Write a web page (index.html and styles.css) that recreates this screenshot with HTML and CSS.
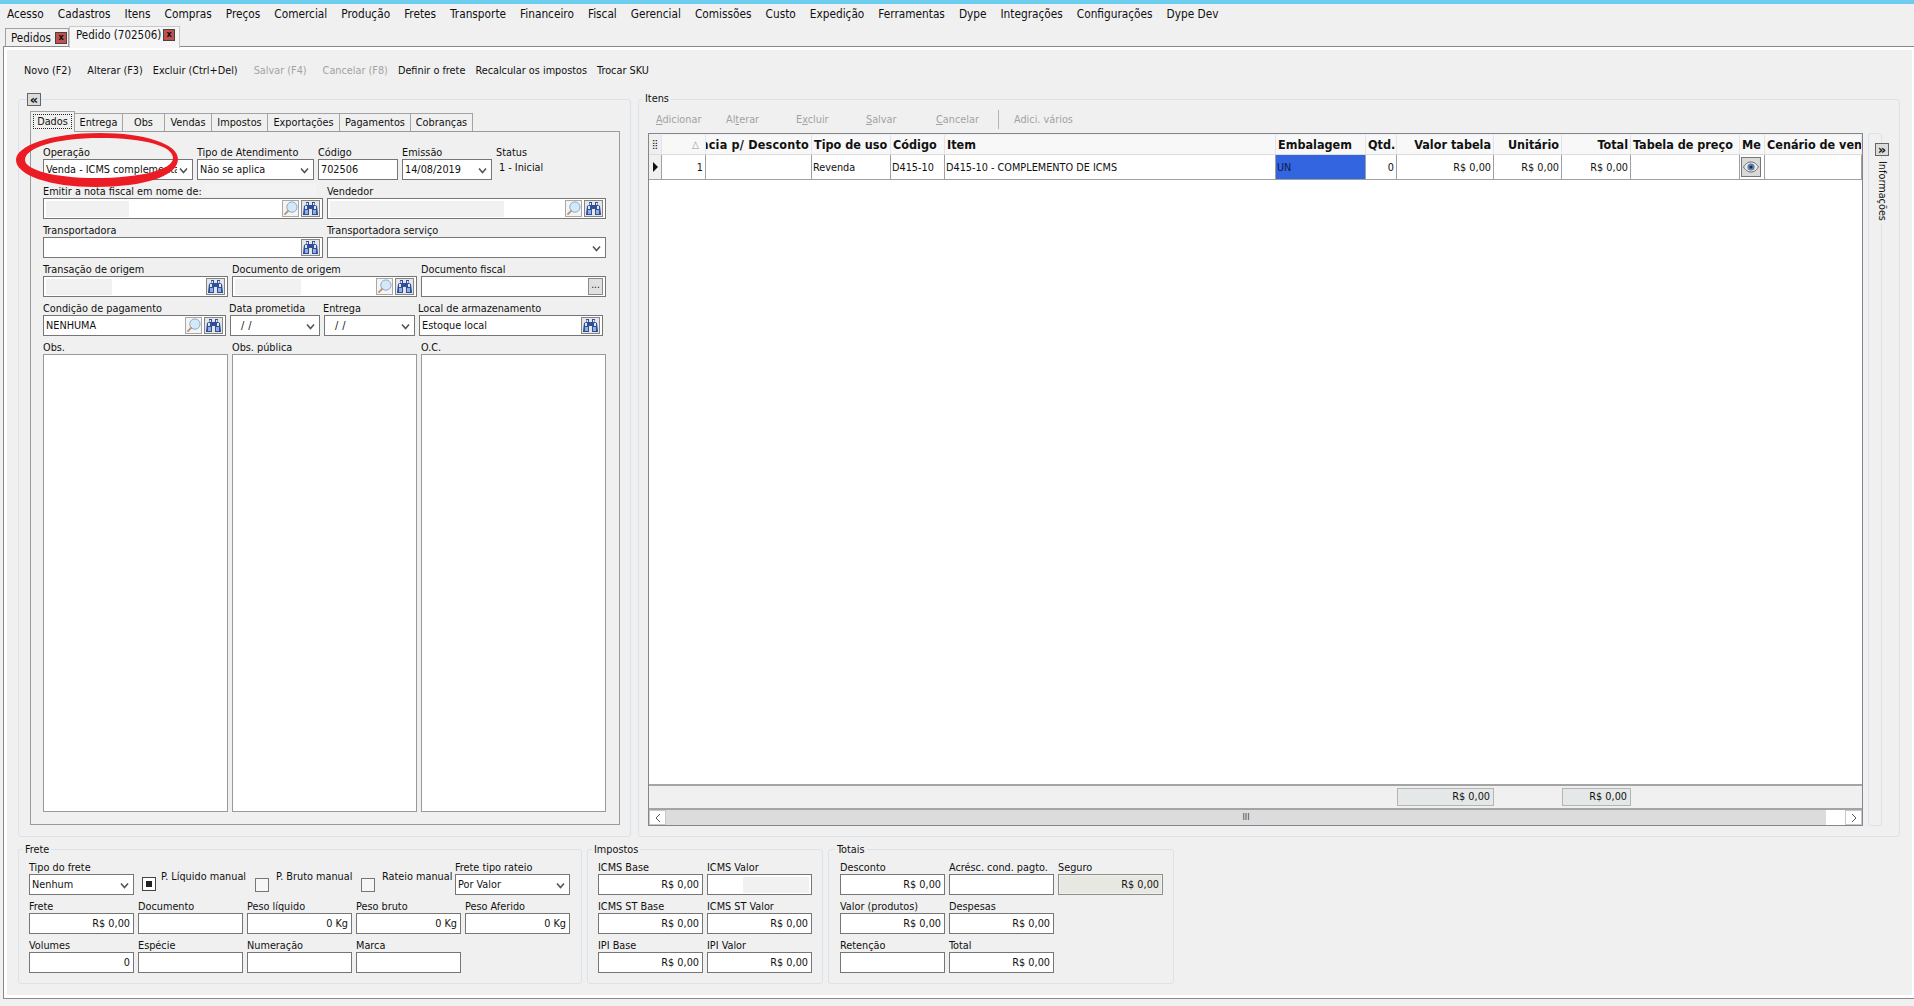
FILE: index.html
```html
<!DOCTYPE html>
<html lang="pt-BR">
<head>
    <meta charset="UTF-8">
    <title>Pedido (702506)</title>
    <link rel="stylesheet" href="styles.css">
</head>
<body>
    <svg class="sprite" width="0" height="0">
        <symbol id="chev" viewBox="0 0 9 7"><path d="M1 1.500 4.500 5.500 8 1.500" fill="none" stroke="#555" stroke-width="1.600"/></symbol>
        <symbol id="binoc" viewBox="0 0 17 15">
            <path d="M4 1h3v3h3V1h3v3l2 1 1 8v1h-6V8H7v6H1v-1l1-8 2-1z" fill="#2f4f9a"/>
            <path d="M3 9h3v4H3zM11 9h3v4h-3z" fill="#8fb0e2"/>
            <path d="M4.500 2H6v2H4.500zM11 2h1.500v2H11zM3 5h2v3H3zM12 5h2v3h-2z" fill="#dde8f7"/>
        </symbol>
        <symbol id="lupa" viewBox="0 0 16 16">
            <circle cx="9.500" cy="6.500" r="5.500" fill="#d3e8f8" stroke="#8aa6bf"/>
            <path d="M6 10 1.500 14.500" stroke="#b8937a" stroke-width="2"/>
        </symbol>
        <symbol id="eye" viewBox="0 0 16 12">
            <path d="M.5 6C3 2 5.500 1 8 1s5 1 7.500 5C13 10 10.500 11 8 11S3 10 .5 6z" fill="#e4e9ee" stroke="#75695f"/>
            <circle cx="8" cy="6" r="3.600" fill="#5b7fae"/>
            <circle cx="8" cy="6" r="1.500" fill="#1d2c44"/>
        </symbol>
    </svg>

    <div class="topbar"></div>
    <nav class="menu">
        <span>Acesso</span><span>Cadastros</span><span>Itens</span><span>Compras</span><span>Preços</span>
        <span>Comercial</span><span>Produção</span><span>Fretes</span><span>Transporte</span><span>Financeiro</span>
        <span>Fiscal</span><span>Gerencial</span><span>Comissões</span><span>Custo</span><span>Expedição</span>
        <span>Ferramentas</span><span>Dype</span><span>Integrações</span><span>Configurações</span><span>Dype Dev</span>
    </nav>

    <div class="doc-tabs">
        <div class="doc-tab">Pedidos <span class="close">x</span></div>
        <div class="doc-tab active">Pedido (702506) <span class="close">x</span></div>
    </div>

    <div class="panel">
        <div class="panel-inner">
            <div class="toolbar">
                <span class="tool">Novo (F2)</span>
                <span class="tool far">Alterar (F3)</span>
                <span class="tool">Excluir (Ctrl+Del)</span>
                <span class="tool far off">Salvar (F4)</span>
                <span class="tool far off">Cancelar (F8)</span>
                <span class="tool">Definir o frete</span>
                <span class="tool">Recalcular os impostos</span>
                <span class="tool">Trocar SKU</span>
            </div>

            <div class="main">
                <section class="group group-left">
                    <button class="toggle toggle-left">«</button>
                    <div class="tabs">
                        <div class="tab active"><span class="focus">Dados</span></div>
                        <div class="tab w-entrega">Entrega</div>
                        <div class="tab w-obs">Obs</div>
                        <div class="tab w-vendas">Vendas</div>
                        <div class="tab w-impostos">Impostos</div>
                        <div class="tab w-export">Exportações</div>
                        <div class="tab w-pagto">Pagamentos</div>
                        <div class="tab w-cobr">Cobranças</div>
                    </div>
                    <div class="pane">
                        <div class="row row-1">
                            <div class="block"><label>Operação</label><div class="field"><span class="val clip">Venda - ICMS complementar</span><svg class="chev"><use href="#chev"/></svg></div></div>
                            <div class="block"><label>Tipo de Atendimento</label><div class="field"><span class="val">Não se aplica</span><svg class="chev"><use href="#chev"/></svg></div></div>
                            <div class="block"><label>Código</label><div class="field"><span class="val">702506</span></div></div>
                            <div class="block"><label>Emissão</label><div class="field"><span class="val">14/08/2019</span><svg class="chev"><use href="#chev"/></svg></div></div>
                            <div class="block"><label>Status</label><div class="status">1 - Inicial</div></div>
                        </div>
                        <div class="row row-2">
                            <div class="block"><label class="with-mask">Emitir a nota fiscal em nome de: <span class="mask-label"></span></label><div class="field"><span class="mask mask-83"></span><span class="ico-btn lupa"><svg><use href="#lupa"/></svg></span><span class="ico-btn"><svg><use href="#binoc"/></svg></span></div></div>
                            <div class="block"><label>Vendedor</label><div class="field"><span class="mask mask-174"></span><span class="ico-btn lupa"><svg><use href="#lupa"/></svg></span><span class="ico-btn"><svg><use href="#binoc"/></svg></span></div></div>
                        </div>
                        <div class="row row-2">
                            <div class="block"><label>Transportadora</label><div class="field"><span class="ico-btn push"><svg><use href="#binoc"/></svg></span></div></div>
                            <div class="block"><label>Transportadora serviço</label><div class="field"><svg class="chev"><use href="#chev"/></svg></div></div>
                        </div>
                        <div class="row row-3">
                            <div class="block"><label>Transação de origem</label><div class="field"><span class="mask mask-66"></span><span class="ico-btn push"><svg><use href="#binoc"/></svg></span></div></div>
                            <div class="block"><label>Documento de origem</label><div class="field"><span class="mask mask-66"></span><span class="ico-btn lupa"><svg><use href="#lupa"/></svg></span><span class="ico-btn"><svg><use href="#binoc"/></svg></span></div></div>
                            <div class="block"><label>Documento fiscal</label><div class="field"><span class="dots">...</span></div></div>
                        </div>
                        <div class="row row-5">
                            <div class="block"><label>Condição de pagamento</label><div class="field"><span class="val">NENHUMA</span><span class="ico-btn lupa"><svg><use href="#lupa"/></svg></span><span class="ico-btn"><svg><use href="#binoc"/></svg></span></div></div>
                            <div class="block"><label>Data prometida</label><div class="field"><span class="val date">/ /</span><svg class="chev"><use href="#chev"/></svg></div></div>
                            <div class="block"><label>Entrega</label><div class="field"><span class="val date">/ /</span><svg class="chev"><use href="#chev"/></svg></div></div>
                            <div class="block"><label>Local de armazenamento</label><div class="field"><span class="val">Estoque local</span><span class="ico-btn push"><svg><use href="#binoc"/></svg></span></div></div>
                        </div>
                        <div class="row row-3 row-memo">
                            <div class="block"><label>Obs.</label><div class="memo"></div></div>
                            <div class="block"><label>Obs. pública</label><div class="memo"></div></div>
                            <div class="block"><label>O.C.</label><div class="memo"></div></div>
                        </div>
                    </div>
                </section>

                <section class="group group-right">
                    <span class="legend">Itens</span>
                    <div class="items-tools">
                        <span class="sub-btn"><u>A</u>dicionar</span>
                        <span class="sub-btn">Al<u>t</u>erar</span>
                        <span class="sub-btn">E<u>x</u>cluir</span>
                        <span class="sub-btn"><u>S</u>alvar</span>
                        <span class="sub-btn short"><u>C</u>ancelar</span>
                        <span class="sep"></span>
                        <span class="sub-btn">Adici. vários</span>
                    </div>
                    <div class="items-body">
                        <div class="grid">
                            <div class="grid-row grid-head">
                                <div class="hc ind">⣿</div>
                                <div class="hc num sort">△</div>
                                <div class="hc num clipl"><span>Importância p/ Desconto</span></div>
                                <div class="hc">Tipo de uso</div>
                                <div class="hc">Código</div>
                                <div class="hc">Item</div>
                                <div class="hc">Embalagem</div>
                                <div class="hc num">Qtd.</div>
                                <div class="hc num">Valor tabela</div>
                                <div class="hc num">Unitário</div>
                                <div class="hc num">Total</div>
                                <div class="hc">Tabela de preço</div>
                                <div class="hc">Me</div>
                                <div class="hc">Cenário de venda</div>
                            </div>
                            <div class="grid-row grid-line">
                                <div class="gc ind"><span class="arrow"></span></div>
                                <div class="gc num">1</div>
                                <div class="gc"></div>
                                <div class="gc">Revenda</div>
                                <div class="gc">D415-10</div>
                                <div class="gc">D415-10 - COMPLEMENTO DE ICMS</div>
                                <div class="gc selected">UN</div>
                                <div class="gc num">0</div>
                                <div class="gc num">R$ 0,00</div>
                                <div class="gc num">R$ 0,00</div>
                                <div class="gc num">R$ 0,00</div>
                                <div class="gc"></div>
                                <div class="gc eye-cell"><span class="eye-btn"><svg><use href="#eye"/></svg></span></div>
                                <div class="gc"></div>
                            </div>
                            <div class="grid-empty"></div>
                            <div class="grid-row grid-foot">
                                <div class="sum sum-valor">R$ 0,00</div>
                                <div class="sum sum-total">R$ 0,00</div>
                            </div>
                            <div class="hscroll">
                                <span class="sb-btn"><svg viewBox="0 0 6 10"><path d="M5 1 1 5l4 4" fill="none" stroke="#555"/></svg></span>
                                <span class="sb-track">III</span>
                                <span class="sb-rest"></span>
                                <span class="sb-btn"><svg viewBox="0 0 6 10"><path d="M1 1l4 4-4 4" fill="none" stroke="#555"/></svg></span>
                            </div>
                        </div>
                        <aside class="side">
                            <button class="toggle toggle-side">»</button>
                            <span class="side-label">Informações</span>
                        </aside>
                    </div>
                </section>
            </div>

            <div class="bottom">
                <section class="group box-frete">
                    <span class="legend">Frete</span>
                    <div class="cols cols-5">
                        <div class="frete-top">
                            <div class="block w-105"><label>Tipo do frete</label><div class="field"><span class="val">Nenhum</span><svg class="chev"><use href="#chev"/></svg></div></div>
                            <div class="check c-1"><span class="box on"></span><span>P. Líquido manual</span></div>
                            <div class="check c-2"><span class="box"></span><span>P. Bruto manual</span></div>
                            <div class="check c-3"><span class="box"></span><span>Rateio manual</span></div>
                            <div class="block w-115"><label>Frete tipo rateio</label><div class="field"><span class="val">Por Valor</span><svg class="chev"><use href="#chev"/></svg></div></div>
                        </div>
                        <div class="block"><label>Frete</label><div class="field num">R$ 0,00</div></div>
                        <div class="block"><label>Documento</label><div class="field"></div></div>
                        <div class="block"><label>Peso líquido</label><div class="field num">0 Kg</div></div>
                        <div class="block"><label>Peso bruto</label><div class="field num">0 Kg</div></div>
                        <div class="block"><label>Peso Aferido</label><div class="field num">0 Kg</div></div>
                        <div class="block"><label>Volumes</label><div class="field num">0</div></div>
                        <div class="block"><label>Espécie</label><div class="field"></div></div>
                        <div class="block"><label>Numeração</label><div class="field"></div></div>
                        <div class="block"><label>Marca</label><div class="field"></div></div>
                    </div>
                </section>

                <section class="group box-impostos">
                    <span class="legend">Impostos</span>
                    <div class="cols cols-2">
                        <div class="block"><label>ICMS Base</label><div class="field num">R$ 0,00</div></div>
                        <div class="block"><label>ICMS Valor</label><div class="field"><span class="mask mask-66 push"></span></div></div>
                        <div class="block"><label>ICMS ST Base</label><div class="field num">R$ 0,00</div></div>
                        <div class="block"><label>ICMS ST Valor</label><div class="field num">R$ 0,00</div></div>
                        <div class="block"><label>IPI Base</label><div class="field num">R$ 0,00</div></div>
                        <div class="block"><label>IPI Valor</label><div class="field num">R$ 0,00</div></div>
                    </div>
                </section>

                <section class="group box-totais">
                    <span class="legend">Totais</span>
                    <div class="cols cols-3">
                        <div class="block"><label>Desconto</label><div class="field num">R$ 0,00</div></div>
                        <div class="block"><label>Acrésc. cond. pagto.</label><div class="field"></div></div>
                        <div class="block"><label>Seguro</label><div class="field num disabled">R$ 0,00</div></div>
                        <div class="block"><label>Valor (produtos)</label><div class="field num">R$ 0,00</div></div>
                        <div class="block span-2"><label>Despesas</label><div class="field num">R$ 0,00</div></div>
                        <div class="block"><label>Retenção</label><div class="field"></div></div>
                        <div class="block span-2"><label>Total</label><div class="field num">R$ 0,00</div></div>
                    </div>
                </section>
            </div>
        </div>
    </div>

    <svg class="circle" width="170" height="60" viewBox="14 130 170 60">
        <path fill="#ec1c24" fill-rule="evenodd" d="M16 160C16 146 50 133 100 133C145 133 178 144 178 159C178 176 145 187 95 187C50 187 16 175 16 160ZM25 160C25 170 55 178 95 178C140 178 173 170 173 158C173 146 145 138 100 138C55 138 25 148 25 160Z"/>
    </svg>
</body>
</html>
```

FILE: styles.css
```css
* {
    box-sizing: border-box;
}
html, body {
    margin: 0;
    height: 1006px;
    overflow: hidden;
}
body {
    position: relative;
    display: flex;
    flex-direction: column;
    background: #f0f0f0;
    font-family: "DejaVu Sans Condensed", "DejaVu Sans", sans-serif;
    font-stretch: condensed;
    font-size: 10.800px;
    color: #111;
}
.sprite {
    position: absolute;
}
.topbar {
    height: 4px;
    background: #6ccdee;
}
.menu {
    display: flex;
    gap: 14px;
    height: 22px;
    padding: 3px 0 0 7px;
    font-size: 11.750px;
    line-height: 14px;
}
.doc-tabs {
    display: flex;
    align-items: flex-end;
    height: 20px;
    padding-left: 5px;
    position: relative;
    z-index: 1;
}
.doc-tab {
    display: flex;
    align-items: center;
    justify-content: space-between;
    width: 64px;
    height: 18px;
    padding: 0 1px 0 5px;
    border: 1px solid #a0a0a0;
    border-bottom: none;
    font-size: 11.500px;
    white-space: nowrap;
}
.doc-tab.active {
    width: 111px;
    height: 22px;
    margin-bottom: -2px;
    padding: 0 4px 5px 6px;
    background: #f6f6f6;
    border-color: #c8c8c8;
}
.close {
    flex: none;
    width: 12px;
    height: 12px;
    background: #c0504d;
    border: 1px solid #444;
    color: #111;
    font-size: 9px;
    font-weight: bold;
    line-height: 9px;
    text-align: center;
}
.panel {
    flex: 1;
    margin: 0 0 7px 3px;
    padding: 3px 2px 3px 3px;
    background: #fff;
    border: 1px solid #8a8a8a;
    border-right: none;
}
.panel-inner {
    display: flex;
    flex-direction: column;
    height: 100%;
    background: #f0f0f0;
    padding-bottom: 11px;
}
.toolbar {
    display: flex;
    height: 49px;
    padding: 14px 0 0 17px;
    line-height: 14px;
    gap: 10px;
}
.tool.far {
    margin-left: 6px;
}
.off {
    color: #a3a3a3;
}
.main {
    display: flex;
    flex: 1;
    min-height: 0;
    gap: 7px;
    padding: 0 12px 0 11px;
}
.group {
    position: relative;
    border: 1px solid #dbe2e9;
    border-radius: 3px;
}
.legend {
    position: absolute;
    top: -8px;
    left: 4px;
    padding: 0 2px;
    background: #f0f0f0;
    line-height: 14px;
}
.toggle {
    position: absolute;
    width: 14px;
    height: 13px;
    padding: 0;
    border: 1px solid #666;
    background: #dcdcdc;
    font: bold 13px/9px "DejaVu Sans", sans-serif;
    color: #111;
}
.toggle-left {
    top: -7px;
    left: 8px;
}
.group-left {
    display: flex;
    flex-direction: column;
    width: 613px;
    padding: 11px 10px 11px 11px;
}
.tabs {
    display: flex;
    align-items: flex-end;
    height: 20px;
    position: relative;
    z-index: 1;
}
.tab {
    height: 18px;
    border: 1px solid #a3a3a3;
    border-bottom: none;
    border-left: none;
    line-height: 17px;
    text-align: center;
}
.tab.active {
    width: 45px;
    height: 21px;
    margin-bottom: -1px;
    padding: 2px 2px 0;
    background: #f0f0f0;
    border-left: 1px solid #a3a3a3;
}
.focus {
    display: block;
    height: 15px;
    border: 1px dotted #222;
    line-height: 13px;
}
.w-entrega { width: 48px; }
.w-obs { width: 42px; }
.w-vendas { width: 47px; }
.w-impostos { width: 56px; }
.w-export { width: 72px; }
.w-pagto { width: 71px; }
.w-cobr { width: 62px; }
.pane {
    display: flex;
    flex-direction: column;
    flex: 1;
    min-height: 0;
    gap: 4px;
    padding: 13px 13px 12px 12px;
    border: 1px solid #9a9a9a;
}
.row {
    display: grid;
    gap: 4px;
}
.row-1 { grid-template-columns: 150px 117px 80px 90px 1fr; }
.row-2 { grid-template-columns: 280px 1fr; }
.row-3 { grid-template-columns: repeat(3, 1fr); }
.row-5 { grid-template-columns: 183px 90px 91px 184px; }
.row-5 .block + .block label {
    margin-left: -1px;
}
.row-memo {
    flex: 1;
    min-height: 0;
}
.block {
    display: flex;
    flex-direction: column;
    min-width: 0;
}
.block label {
    display: flex;
    gap: 3px;
    height: 14px;
    line-height: 16px;
    white-space: nowrap;
}
.field {
    display: flex;
    align-items: center;
    height: 21px;
    padding: 0 2px;
    gap: 2px;
    background: #fff;
    border: 1px solid #767676;
    line-height: 19px;
    white-space: nowrap;
    overflow: hidden;
}
.field.num {
    justify-content: flex-end;
    padding-right: 3px;
}
.field.disabled {
    background: #e8e8e2;
    border-color: #8f8f8f;
    box-shadow: inset 0 0 0 1px #f0f0ea;
}
.val {
    flex: 1;
    min-width: 0;
    overflow: hidden;
}
.val.clip {
    flex: none;
    width: 131px;
}
.date {
    padding-left: 8px;
    word-spacing: 1px;
}
.chev {
    width: 9px;
    height: 7px;
    flex: none;
    margin: 1px 2px 0 auto;
}
.status {
    padding: 2px 0 0 3px;
    line-height: 14px;
}
.mask {
    display: block;
    height: 16px;
    background: #f1f1f1;
}
.mask-66 { width: 66px; }
.mask-83 { width: 83px; }
.mask-174 { width: 174px; }
.mask-label {
    display: block;
    width: 111px;
    height: 13px;
    margin-top: -1px;
    background: #f3f3f3;
}
.ico-btn {
    display: flex;
    align-items: center;
    justify-content: center;
    flex: none;
    width: 19px;
    height: 17px;
    background: #e6e6e6;
    border: 1px solid #858585;
}
.ico-btn svg {
    width: 17px;
    height: 15px;
}
.ico-btn.lupa {
    width: 17px;
    margin-left: auto;
    background: #f4f4f4;
    border-color: #a8a8a8;
}
.push {
    margin-left: auto;
}
.dots {
    width: 15px;
    height: 17px;
    margin-left: auto;
    background: #e0e0e0;
    border: 1px solid #8a8a8a;
    font-size: 10px;
    line-height: 12px;
    text-align: center;
}
.memo {
    flex: 1;
    background: #fff;
    border: 1px solid #999;
}
.group-right {
    display: flex;
    flex-direction: column;
    flex: 1;
    min-width: 0;
    padding: 9px 17px 10px 9px;
}
.items-tools {
    display: flex;
    align-items: center;
    height: 20px;
    margin-bottom: 4px;
    padding-left: 8px;
    color: #a3a3a3;
}
.sub-btn {
    width: 70px;
}
.sub-btn.short {
    width: 62px;
}
.sep {
    width: 1px;
    height: 19px;
    margin-right: 15px;
    background: #b4b4b4;
}
.items-body {
    display: flex;
    flex: 1;
    min-height: 0;
    gap: 5px;
}
.grid {
    display: flex;
    flex-direction: column;
    flex: 1;
    min-width: 0;
    background: #fff;
    border: 1px solid #85858f;
}
.grid-row {
    display: grid;
    grid-template-columns: 13px 44px 106px 79px 54px 331px 90px 31px 97px 68px 69px 109px 25px 1fr;
}
.grid-head {
    height: 21px;
    background: #f8f8f8;
    border-bottom: 1px solid #dcdcdc;
    border-top: 1px solid #f0f0f0;
    font-size: 12.500px;
    font-weight: bold;
    line-height: 19px;
}
.hc {
    padding: 0 2px;
    border-right: 1px solid #e4e4e4;
    white-space: nowrap;
    overflow: hidden;
}
.hc.num {
    text-align: right;
}
.hc.sort {
    padding-right: 6px;
    color: #999;
    font-size: 10px;
    font-weight: normal;
}
.hc.ind {
    padding: 0;
    background: #efefef;
    font-size: 9px;
    font-weight: normal;
    text-align: center;
}
.clipl {
    display: flex;
    justify-content: flex-end;
}
.clipl span {
    flex: none;
    letter-spacing: .2px;
}
.grid-line {
    height: 25px;
    border-bottom: 1px solid #a0a0a0;
    line-height: 25px;
}
.gc {
    padding: 0 1px;
    border-right: 1px solid #a0a0a0;
    white-space: nowrap;
    overflow: hidden;
}
.gc.ind {
    display: flex;
    align-items: center;
    justify-content: center;
    padding: 0;
    background: #f0f0f0;
}
.arrow {
    border-left: 5px solid #111;
    border-top: 5px solid transparent;
    border-bottom: 5px solid transparent;
}
.gc.num {
    padding-right: 2px;
    text-align: right;
}
.gc.selected {
    background: #3465e0;
    color: #0c1c4c;
}
.eye-cell {
    padding: 2px 1px;
}
.eye-btn {
    display: flex;
    align-items: center;
    justify-content: center;
    width: 20px;
    height: 20px;
    background: #d9d9d9;
    border: 1px solid #777;
}
.eye-btn svg {
    width: 16px;
    height: 12px;
}
.grid-empty {
    flex: 1;
}
.grid-foot {
    height: 26px;
    padding-top: 2px;
    background: #f0f0f0;
    border-top: 2px solid #a4a4a4;
    border-bottom: 2px solid #a4a4a4;
}
.sum {
    height: 18px;
    padding-right: 3px;
    background: #e4e8e8;
    border: 1px solid #b4b4b4;
    line-height: 16px;
    text-align: right;
}
.sum-valor { grid-column: 9; }
.sum-total { grid-column: 11; }
.hscroll {
    display: flex;
    height: 15px;
}
.sb-btn {
    display: flex;
    align-items: center;
    justify-content: center;
    flex: none;
    width: 17px;
    background: #fff;
    border: 1px solid #c8c8c8;
}
.sb-btn svg {
    width: 6px;
    height: 10px;
}
.sb-track {
    flex: 1;
    background: #dcdcdc;
    color: #444;
    font-size: 9px;
    line-height: 15px;
    text-align: center;
}
.sb-rest {
    width: 19px;
    background: #fff;
}
.side {
    position: relative;
    width: 14px;
    border: 1px solid #dbe2e9;
    border-radius: 3px;
}
.toggle-side {
    top: 9px;
    left: 6px;
}
.side-label {
    position: absolute;
    top: 25px;
    left: 6px;
    padding: 2px 0;
    background: #f0f0f0;
    line-height: 14px;
    writing-mode: vertical-rl;
}
.bottom {
    display: flex;
    gap: 5px;
    height: 135px;
    margin-top: 12px;
    padding-left: 11px;
}
.bottom .legend {
    top: -7px;
}
.box-frete {
    width: 564px;
    padding: 10px 0 0 10px;
}
.box-impostos {
    width: 236px;
    padding: 10px 0 0 10px;
}
.box-totais {
    width: 346px;
    padding: 10px 0 0 11px;
}
.box-totais .legend {
    left: 6px;
}
.cols {
    display: grid;
    gap: 4px;
}
.cols-5 { grid-template-columns: repeat(5, 105px); }
.cols-2 { grid-template-columns: repeat(2, 105px); }
.cols-3 { grid-template-columns: repeat(3, 105px); }
.span-2 { grid-column: span 2; width: 105px; }
.frete-top {
    display: flex;
    grid-column: 1 / -1;
}
.w-105 { width: 105px; }
.w-115 { width: 115px; }
.check {
    display: flex;
    gap: 5px;
    padding-top: 10px;
    line-height: 14px;
    white-space: nowrap;
}
.c-1 { width: 113px; margin-left: 8px; }
.c-2 { width: 106px; gap: 7px; }
.c-3 { width: 94px; gap: 7px; }
.box {
    width: 14px;
    height: 14px;
    margin-top: 8px;
    background: #f6f6f6;
    border: 1px solid #777;
}
.box.on {
    margin-top: 7px;
    border-color: #444;
    border-width: 1px;
    background: #fff;
    padding: 3px;
}
.box.on::after {
    content: "";
    display: block;
    width: 6px;
    height: 6px;
    background: #222;
}
.circle {
    position: absolute;
    top: 130px;
    left: 14px;
}
```
